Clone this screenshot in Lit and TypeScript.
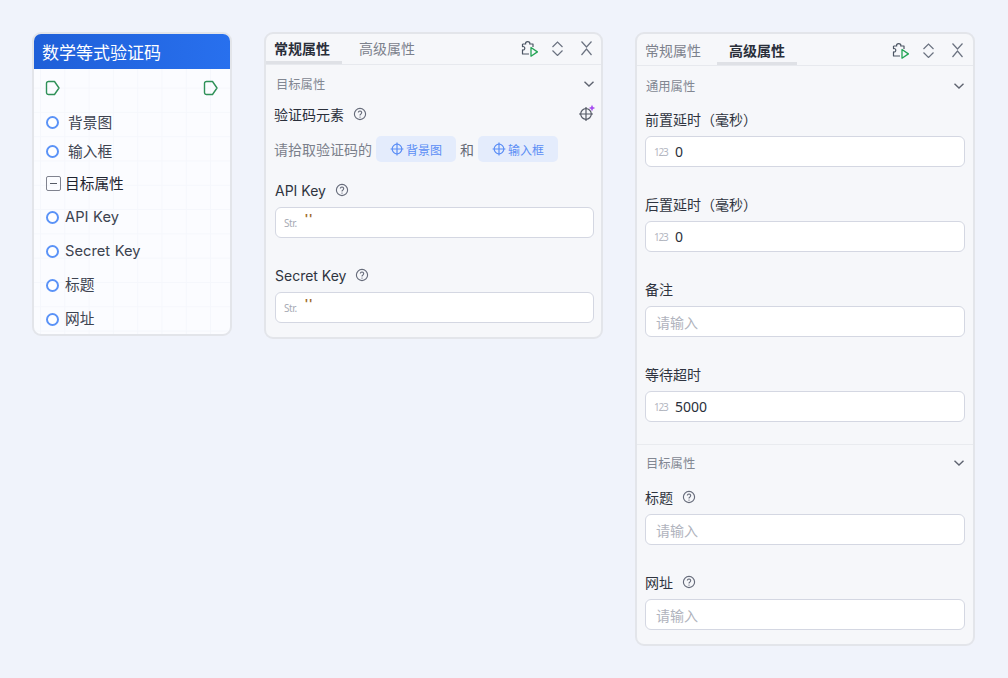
import { LitElement, html, css, svg } from "lit";
import { customElement } from "lit/decorators.js";

const help = html`<svg class="help" viewBox="0 0 14 14"><circle cx="7" cy="7" r="5.6" fill="none" stroke="currentColor" stroke-width="1.15"/><path d="M5.3 5.6a1.7 1.7 0 1 1 2.6 1.5c-.6.35-.9.7-.9 1.3" fill="none" stroke="currentColor" stroke-width="1.1"/><circle cx="7" cy="10.1" r=".7" fill="currentColor"/></svg>`;
const chevron = html`<svg class="chev" viewBox="0 0 12 12"><path d="M1.5 3.8 6 8l4.5-4.2" fill="none" stroke="currentColor" stroke-width="1.4"/></svg>`;
const target = (c: string) => svg`<circle cx="7" cy="7" r="4.8" fill="none" stroke="${c}" stroke-width="1.2"/><path d="M7 .6v12.800M.6 7h12.800" stroke="${c}" stroke-width="1.2"/>`;

function tools() {
  return html`<div class="tools">
    <svg class="t-puzzle" width="17" height="16" viewBox="0 0 17 16"><path d="M1.5 3h3.2C4.2 1.6 5.3.6 6.7.6s2.6 1 2 2.4H12v3M1.5 3v2.6c1.3-.4 2.3.5 2.3 1.7S2.700 9.300 1.500 8.900V13H8" fill="none" stroke="#4b5563" stroke-width="1.2" stroke-linejoin="round"/><path d="M10 6.500v8.700l6.400-4.350z" fill="none" stroke="#23a455" stroke-width="1.3" stroke-linejoin="round"/></svg>
    <svg class="t-diamond" width="11" height="15" viewBox="0 0 11 15"><path d="M.5 6 5.500 1l5 5M.5 9.500l5 5 5-5" fill="none" stroke="#6b7280" stroke-width="1.2"/></svg>
    <svg class="t-close" width="11" height="15" viewBox="0 0 11 15"><path d="M.5.500l5 5.500 5-5.500M.5 14l5-6 5 6" fill="none" stroke="#6b7280" stroke-width="1.2"/></svg>
  </div>`;
}

@customElement("app-root")
export class AppRoot extends LitElement {
  static styles = css`
    :host { display: flex; align-items: flex-start; min-height: 678px; box-sizing: border-box; padding: 32px 0 0 32px; background: #f0f3fb; font-family: "Inter", "Noto Sans CJK SC", "Noto Sans", sans-serif; color: #262b36; }
    * { box-sizing: border-box; }

    .node { width: 200px; height: 304px; margin-right: 32px; border: 2px solid #e3e5ea; border-radius: 9px; overflow: hidden;
      background-color: #fbfcff;
      background-image: linear-gradient(#f5f7fc 1px, transparent 1px), linear-gradient(90deg, #f5f7fc 1px, transparent 1px);
      background-size: 24.3px 24.3px; background-position: 6px 5px; }
    .node-head { height: 35px; background: linear-gradient(90deg, #1f5fd8, #2870ee); color: #fff; font-size: 17px; line-height: 38px; padding-left: 8px; }
    .ports { display: flex; justify-content: space-between; padding: 11px 11px 0 11px; height: 39px; }
    .nrow { display: flex; align-items: center; gap: 6px; padding-left: 12px; height: 34px; font-size: 14.7px; color: #3d4350; word-spacing: .5px; }
    .nrow.in { height: 29px; gap: 9px; }
    .cjk { margin-bottom: 2px; }
    .cjk.up { margin-bottom: 3px; }
    .dot { width: 13px; height: 13px; border: 2px solid #5b93f7; border-radius: 50%; flex: none; background: #fff; }
    .minus { width: 15px; height: 15px; border: 1.5px solid #80838f; border-radius: 2px; flex: none; display: flex; align-items: center; justify-content: center; margin-right: -4px; }
    .minus::after { content: ""; width: 7px; height: 1.5px; background: #555a66; }
    .nrow.group { color: #1f2430; height: 33px; margin-top: 1px; gap: 8px; }

    .panel { border: 2px solid #e3e5ea; border-radius: 9px; background: #f6f7fa; }
    .p1 { width: 339px; height: 307px; margin-right: 32px; }
    .p2 { width: 340px; height: 614px; }
    .tabs { display: flex; align-items: flex-start; border-bottom: 1px solid #e7e9ee; height: 31px; position: relative; }
    .tab { font-size: 14px; line-height: 30px; color: #7c818c; text-align: center; height: 30px; }
    .tab.on { color: #2a2f3a; font-weight: 700; border-bottom: 3px solid #dfe1e6; }
    .p1 .tab.on { width: 76px; margin-right: 9px; text-align: left; padding-left: 8px; }
    .p1 .tab.off { width: 74px; text-align: left; padding-left: 8px; }
    .p2 .tabs { height: 32px; }
    .p2 .tab { padding-top: 2px; height: 31px; }
    .p2 .tab.on { width: 80px; }
    .p2 .tab.off { width: 80px; text-align: left; padding-left: 8px; }
    .tools { position: absolute; right: 9px; top: 7px; display: flex; align-items: flex-start; }
    .p2 .tools { top: 9px; right: 10px; }
    .t-diamond { margin-left: 14px; }
    .t-close { margin-left: 18px; }
    .section { display: flex; justify-content: space-between; align-items: center; font-size: 12.3px; color: #828792; height: 36px; padding: 2px 6px 0 10px; }
    .p2 .section { height: 38px; padding: 2px 8px 0 9px; }
    .chev { width: 12px; height: 12px; color: #5f6470; }
    .help { width: 14px; height: 14px; color: #666b7a; flex: none; }

    .pick { display: flex; align-items: center; gap: 9px; padding: 0 5px 0 8px; font-size: 14px; height: 26px; color: #2a2f3a; }
    .pick .sp { flex: 1; }
    .crossh { width: 20px; height: 20px; }
    .hint { display: flex; align-items: center; padding-left: 8px; margin-top: 9px; height: 26px; font-size: 14px; color: #7b808b; }
    .hint .and { margin: 0 4px; color: #666b76; }
    .btn { display: flex; align-items: center; justify-content: center; gap: 2px; width: 80px; height: 26px; margin-left: 4px; border-radius: 5px; background: #e4ecfc; color: #5b8ef5; font-size: 12px; }
    .and + .btn { margin-left: 0; }
    .btn svg { width: 14px; height: 14px; }

    .field { padding: 0 8px; }
    .p1 .field { margin-top: 16px; padding: 0 7px 0 9px; }
    .p1 .field + .field { margin-top: 25px; }
    .label { display: flex; align-items: center; gap: 9px; font-size: 14px; height: 24px; color: #2f3440; }
    .box { display: flex; align-items: center; height: 31px; margin-top: 5px; background: #fff; border: 1px solid #d4d7e2; border-radius: 6px; padding-left: 8px; font-size: 14px; color: #2a2f3a; }
    .pfx { color: #a7abb5; font-size: 10px; width: 21px; letter-spacing: -.4px; font-family: "Noto Sans", sans-serif; }
    .pfx.n { letter-spacing: -1.2px; color: #b3b6bf; }
    .quote { color: #a06a2a; font-family: "Liberation Sans", sans-serif; font-weight: 700; font-size: 12px; letter-spacing: 1.5px; margin-bottom: 8px; }
    .val { font-family: "Noto Sans", sans-serif; font-size: 14px; }
    .ph { color: #b0b3bd; font-size: 14px; padding-left: 2px; }
    .stack { display: flex; flex-direction: column; gap: 25px; padding-top: 3px; }
    .divider { border-top: 1px solid #e9ebef; margin-top: 22px; }
    .p2 .section.b { height: 37px; padding: 0 8px 2px 9px; }
  `;

  private field(label: string, hasHelp: boolean, pfx: any) {
    return html`<div class="field"><div class="label">${label}${hasHelp ? help : ""}</div>
      <div class="box">${pfx}</div></div>`;
  }

  render() {
    const str = html`<span class="pfx">Str.</span><span class="quote">''</span>`;
    const num = (v: string) => html`<span class="pfx n">123</span><span class="val">${v}</span>`;
    const ph = html`<span class="ph">请输入</span>`;
    const port = html`<svg width="16" height="16" viewBox="0 0 16 16"><path d="M1.500 3.500a2 2 0 0 1 2-2h6l4.500 6.500-4.500 6.500h-6a2 2 0 0 1-2-2z" fill="none" stroke="#2f9158" stroke-width="1.4" stroke-linejoin="round"/></svg>`;
    return html`
      <div class="node">
        <div class="node-head">数学等式验证码</div>
        <div class="ports">${port}${port}</div>
        <div class="nrow in"><span class="dot"></span><span class="cjk">背景图</span></div>
        <div class="nrow in"><span class="dot"></span><span class="cjk">输入框</span></div>
        <div class="nrow group"><span class="minus"></span><span class="cjk">目标属性</span></div>
        <div class="nrow"><span class="dot"></span>API Key</div>
        <div class="nrow"><span class="dot"></span>Secret Key</div>
        <div class="nrow"><span class="dot"></span><span class="cjk up">标题</span></div>
        <div class="nrow"><span class="dot"></span><span class="cjk up">网址</span></div>
      </div>

      <div class="panel p1">
        <div class="tabs"><div class="tab on">常规属性</div><div class="tab off">高级属性</div>${tools()}</div>
        <div class="section">目标属性 ${chevron}</div>
        <div class="pick">验证码元素 ${help}<span class="sp"></span>
          <svg class="crossh" viewBox="0 0 20 20"><circle cx="10" cy="10" r="5.300" fill="none" stroke="#555a66" stroke-width="1.200"/><path d="M10 3v14M3 10h14" stroke="#555a66" stroke-width="1.200"/><path d="M16 .8l1 2.200 2.200 1-2.200 1-1 2.200-1-2.200-2.200-1 2.200-1z" fill="#a64df0"/></svg>
        </div>
        <div class="hint">请拾取验证码的
          <span class="btn"><svg viewBox="0 0 14 14">${target("#5b8ef5")}</svg>背景图</span>
          <span class="and">和</span>
          <span class="btn"><svg viewBox="0 0 14 14">${target("#5b8ef5")}</svg>输入框</span>
        </div>
        ${this.field("API Key", true, str)}
        ${this.field("Secret Key", true, str)}
      </div>

      <div class="panel p2">
        <div class="tabs"><div class="tab off">常规属性</div><div class="tab on">高级属性</div>${tools()}</div>
        <div class="section">通用属性 ${chevron}</div>
        <div class="stack">
          ${this.field("前置延时（毫秒）", false, num("0"))}
          ${this.field("后置延时（毫秒）", false, num("0"))}
          ${this.field("备注", false, ph)}
          ${this.field("等待超时", false, num("5000"))}
        </div>
        <div class="divider"></div>
        <div class="section b">目标属性 ${chevron}</div>
        <div class="stack">
          ${this.field("标题", true, ph)}
          ${this.field("网址", true, ph)}
        </div>
      </div>
    `;
  }
}
